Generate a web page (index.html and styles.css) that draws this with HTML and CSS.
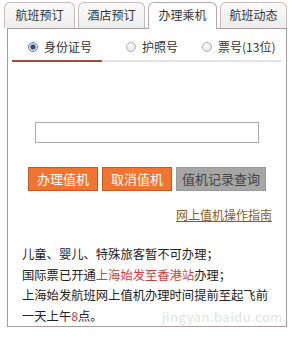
FILE: index.html
```html
<!DOCTYPE html>
<html>
<head>
  <title>办理乘机</title>
  <link rel="stylesheet" href="styles.css">
</head>
<body>
  <div class="box">
    <!-- Tabbladen -->
    <div class="tabs">
      <div class="tab t1">航班预订</div>
      <div class="tab t2">酒店预订</div>
      <div class="tab t3 active">办理乘机</div>
      <div class="tab t4">航班动态</div>
    </div>

    <!-- Paneel -->
    <div class="panel">
      <div class="radios">
        <label class="radio r1"><span class="dot on"></span>身份证号</label>
        <label class="radio r2"><span class="dot"></span>护照号</label>
        <label class="radio r3"><span class="dot"></span>票号(13位)</label>
      </div>
      <div class="line"><div class="bar"></div></div>

      <input type="text" class="field">

      <div class="buttons">
        <button class="btn orange b1">办理值机</button>
        <button class="btn orange b2">取消值机</button>
        <button class="btn gray b3">值机记录查询</button>
      </div>

      <div class="guide"><a href="#">网上值机操作指南</a></div>

      <div class="notes">
        <p>儿童、婴儿、特殊旅客暂不可办理；</p>
        <p>国际票已开通<span class="red">上海始发至香港站</span>办理；</p>
        <p>上海始发航班网上值机办理时间提前至起飞前</p>
        <p>一天上午<span class="red">8</span>点。</p>
      </div>

      <div class="mark">jingyan.baidu.com</div>
    </div>
  </div>
</body>
</html>
```

FILE: styles.css
```css
/* Basis */
body {
  margin: 0;
  background: #fff;
  font-family: "Noto Sans CJK SC", "DejaVu Sans", sans-serif;
  font-size: 12px;
  color: #333;
}

.box {
  width: 298px;
}

/* Tabbladen */
.tabs {
  display: flex;
  gap: 3px;
  padding: 2px 0 0 4px;
  height: 26px;
  position: relative;
  z-index: 1;
}

.tab {
  box-sizing: border-box;
  height: 26px;
  line-height: 24px;
  text-align: center;
  border: 1px solid #cbbcbc;
  border-bottom: none;
  border-radius: 6px 6px 0 0;
  background: linear-gradient(#fafafa, #ededed);
  color: #333;
}

.t1 { width: 71px; }
.t2 { width: 67px; }
.t3 { width: 69px; }
.t4 { width: 67px; }

.tab.active {
  background: #fff;
  height: 27px;
  border-color: #b8a8a8;
}

/* Paneel */
.panel {
  position: relative;
  box-sizing: border-box;
  margin-left: 7px;
  width: 280px;
  height: 299px;
  border: 1px solid #a99b9b;
  background: #fff;
}

.radios {
  display: flex;
  margin-top: 8px;
  padding-left: 20px;
  height: 20px;
  line-height: 20px;
}

.radio {
  display: flex;
  align-items: center;
  gap: 6px;
}

.r1 { width: 98px; }
.r2 { width: 76px; }

.dot {
  box-sizing: border-box;
  width: 10px;
  height: 10px;
  border-radius: 50%;
  border: 1px solid #b0b0b0;
  background: radial-gradient(circle at 40% 35%, #fff, #ddd);
}

.dot.on {
  border-color: #6a7c95;
  background: radial-gradient(circle, #2c4a7a 0, #2c4a7a 2px, #cfd8e6 3px, #f4f6fa 5px);
}

.line {
  margin: 3px 4px 0;
  height: 2px;
  background: #e4e4e4;
}

.bar {
  width: 90px;
  height: 2px;
  background: #9c4e3a;
}

/* Invoerveld */
.field {
  display: block;
  box-sizing: border-box;
  margin: 60px 0 0 27px;
  width: 224px;
  height: 21px;
  border: 1px solid #aaa;
  padding: 0;
}

/* Knoppen */
.buttons {
  display: flex;
  gap: 4px;
  margin: 24px 0 0 20px;
}

.btn {
  box-sizing: border-box;
  height: 24px;
  padding: 0;
  font-family: inherit;
  font-size: 13px;
  line-height: 20px;
  border: 1px solid #c4581f;
}

.orange {
  background: #f17530;
  color: #fff;
}

.gray {
  background: #a6a6a6;
  border-color: #999;
  color: #444;
}

.b1, .b2 { width: 70px; }
.b3 { width: 90px; }

/* Link */
.guide {
  margin-top: 16px;
  padding-right: 14px;
  text-align: right;
  line-height: 16px;
}

.guide a {
  color: #8a5a2a;
  text-decoration: underline;
}

/* Opmerkingen */
.notes {
  margin-top: 21px;
  padding-left: 14px;
  font-size: 12.3px;
  line-height: 20.5px;
  color: #222;
}

.notes p {
  margin: 0;
}

.red {
  color: #c8403a;
}

.mark {
  position: absolute;
  left: 154px;
  top: 278px;
  font-size: 13px;
  color: #e2e2e2;
  letter-spacing: 0.5px;
}
```
